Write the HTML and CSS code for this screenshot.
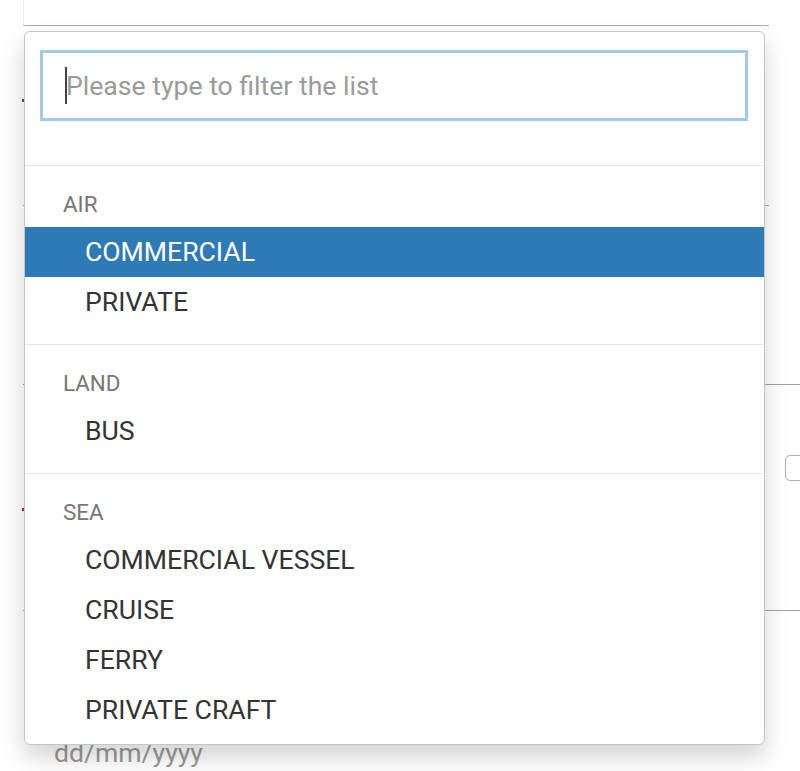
FILE: index.html
```html
<!DOCTYPE html>
<html lang="en">
<head>
<meta charset="utf-8">
<title>Transport type</title>
<link rel="stylesheet" href="styles.css">
</head>
<body>
<div class="page">
  <div class="form">
    <div class="field f1"></div>
    <div class="field f2"><span class="mark dark"></span></div>
    <div class="field f3"></div>
    <div class="field f4"><span class="mark red"></span><span class="checkbox"></span></div>
    <div class="date">dd/mm/yyyy</div>
  </div>
  <div class="dropdown">
    <div class="search"><input class="filter" type="text" placeholder="Please type to filter the list"><span class="caret"></span></div>
    <ul class="groups">
      <li class="group">
        <div class="group-label">AIR</div>
        <ul class="opts">
          <li class="opt active">COMMERCIAL</li>
          <li class="opt">PRIVATE</li>
        </ul>
      </li>
      <li class="group">
        <div class="group-label">LAND</div>
        <ul class="opts">
          <li class="opt">BUS</li>
        </ul>
      </li>
      <li class="group">
        <div class="group-label">SEA</div>
        <ul class="opts">
          <li class="opt">COMMERCIAL VESSEL</li>
          <li class="opt">CRUISE</li>
          <li class="opt">FERRY</li>
          <li class="opt">PRIVATE CRAFT</li>
        </ul>
      </li>
    </ul>
  </div>
</div>
</body>
</html>
```
FILE: styles.css
```css
* { box-sizing: border-box; }
html, body { margin: 0; padding: 0; background: #fff; }
body { font-family: Roboto, "Liberation Sans", Arial, sans-serif; overflow: hidden; }
.page { position: relative; width: 800px; height: 771px; overflow: hidden; }

.form { display: flex; flex-direction: column; }
.field { display: flex; align-items: flex-start; margin-left: 23px; }
.f1 { width: 746px; height: 26px; border-left: 1px solid #eeeeee; border-bottom: 1px solid #a9a9a9; }
.f2 { width: 746px; height: 180px; border-bottom: 1px solid #a9a9a9; }
.f3 { width: 777px; height: 179px; border-bottom: 1px solid #a0a0a0; }
.f4 { width: 777px; height: 226px; border-bottom: 1px solid #a0a0a0; }
.mark { display: block; width: 2px; height: 3px; margin-left: -1px; }
.mark.dark { background: #555; margin-top: 73px; }
.mark.red { background: #e02020; margin-top: 123px; }
.checkbox { display: block; width: 26px; height: 26px; margin-left: auto; margin-right: -11px; margin-top: 70px; border: 1px solid #b0b0b0; border-radius: 5px; background: #fff; }
.date { margin-top: 127px; padding-left: 54px; font-size: 26.6px; line-height: 30px; color: #999; }

.dropdown {
  position: absolute; top: 31px; left: 24px;
  width: 741px; height: 714px;
  background: #fff;
  border: 1px solid #c6c6c6;
  border-radius: 6px;
  box-shadow: 0 12px 24px rgba(0,0,0,0.175);
  overflow: hidden;
}
.search { position: relative; padding: 18px 16px 44px 15px; border-bottom: 1px solid #e5e5e5; }
.filter {
  display: block; width: 100%; height: 71px;
  border: 3px solid #a2c9e7; border-radius: 0;
  padding: 0 10px 0 23px;
  font-family: inherit; font-size: 26.6px; color: #333;
  outline: none; background: #fff;
}
.filter::placeholder { color: #9a9a9a; }
.caret { position: absolute; left: 40px; top: 35px; width: 2px; height: 37px; background: #444; }

.groups, .opts { list-style: none; margin: 0; padding: 0; }
.group { padding: 11px 0 17px; border-bottom: 1px solid #e5e5e5; }
.group:last-child { border-bottom: none; }
.group-label { height: 50px; padding: 5px 0 0 38px; line-height: 45px; font-size: 22.4px; color: #777; }
.opt { height: 50px; line-height: 50px; padding-left: 60px; font-size: 26.6px; color: #333; }
.opt.active { background: #2f79b5; color: #fff; }
```
